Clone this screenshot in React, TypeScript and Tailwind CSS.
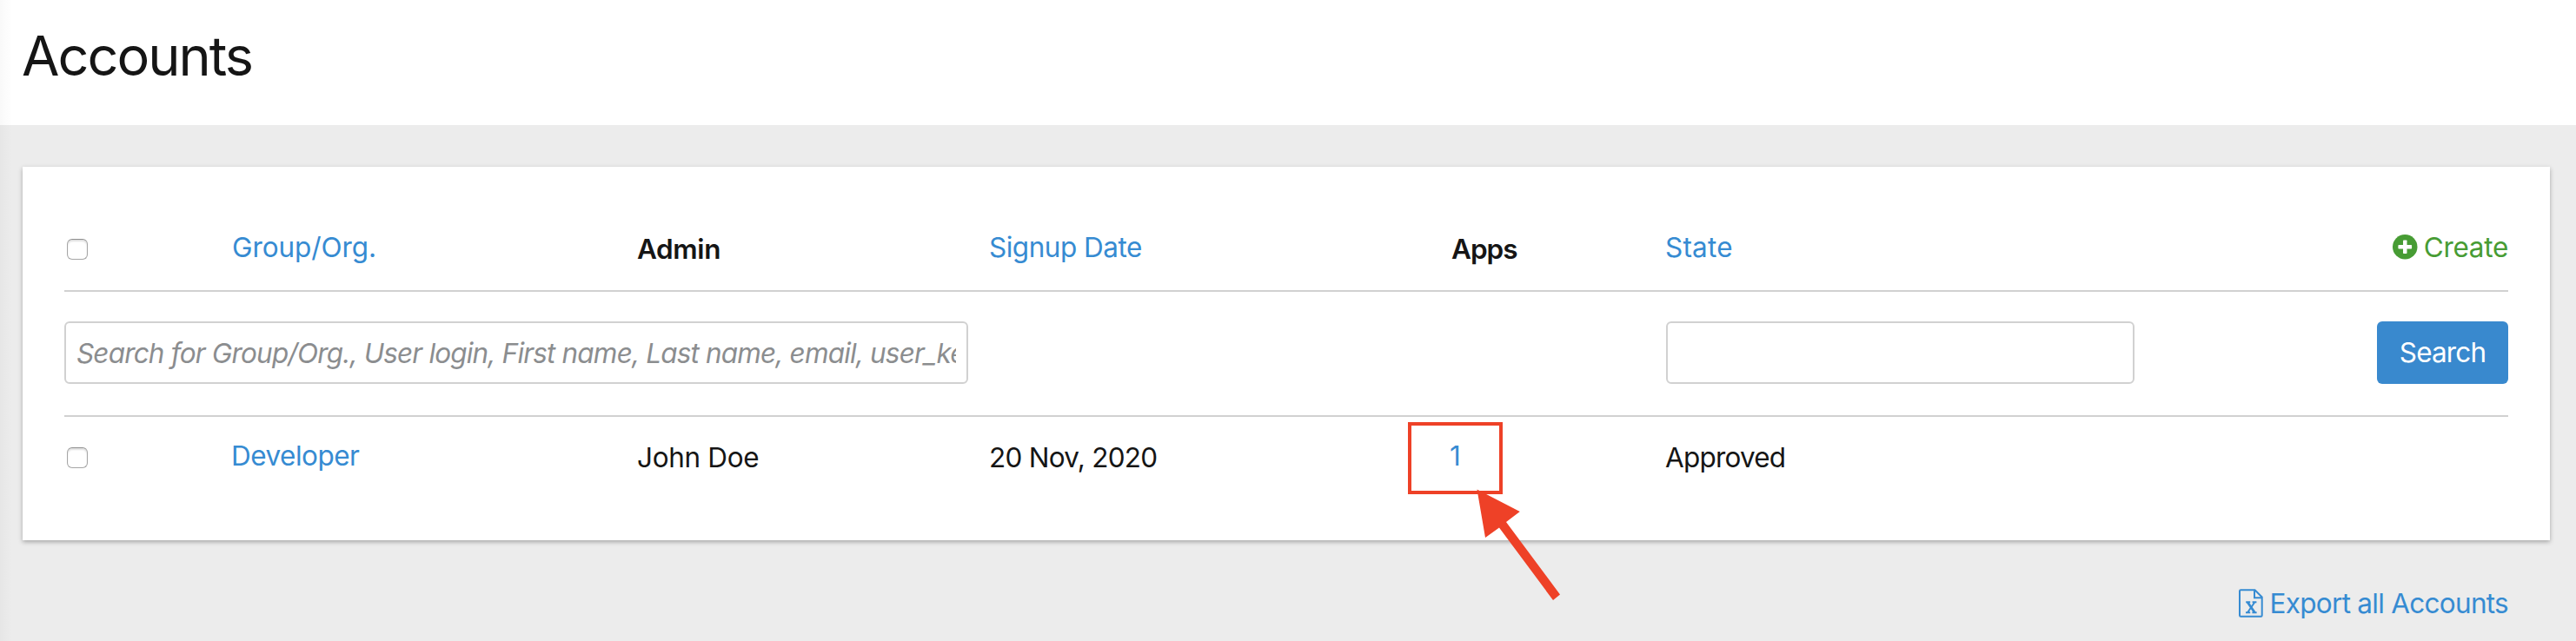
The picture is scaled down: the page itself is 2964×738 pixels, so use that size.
import React from 'react';

const GRID = 'grid grid-cols-[192px_467px_405px_532px_246px_1fr]';

function Checkbox() {
  return (
    <div className="ml-[3px] size-6 rounded-[6px] border border-[#a6a6a6] border-t-[#8f8f8f] bg-white shadow-[inset_0_2px_2px_rgba(0,0,0,0.13)]" />
  );
}

function PlusCircle() {
  return (
    <svg viewBox="0 0 28 28" className="mt-[5px] size-[28.5px]" aria-hidden="true">
      <circle cx="14" cy="14" r="14" fill="#479c34" />
      <rect x="6.3" y="11.8" width="15.4" height="4.4" rx="0.8" fill="#fff" />
      <rect x="11.8" y="6.3" width="4.4" height="15.4" rx="0.8" fill="#fff" />
    </svg>
  );
}

function ExcelFile() {
  return (
    <svg viewBox="0 0 28 33" className="mt-[3px] h-[33px] w-7" fill="none" stroke="#368bd2" aria-hidden="true">
      <path d="M2.3 1.3H18.5L26.7 9.5V30.5Q26.7 31.7 25.5 31.7H2.3Q1 31.7 1 30.5V2.5Q1 1.3 2.3 1.3Z" strokeWidth="2" />
      <path d="M18 1.8V10.3H26.3" strokeWidth="2" />
      <path d="M10.2 15.5L18.2 27" strokeWidth="2.8" />
      <path d="M18.2 15.5L10.2 27M8.2 15.3H13.2M15.6 15.3H20.4M8 27.2H13.2M15.4 27.2H20.6" strokeWidth="2" />
    </svg>
  );
}

export default function App() {
  return (
    <div className="relative h-[738px] w-[2964px] overflow-hidden bg-[#ececec] font-['Inter',sans-serif] text-[31.5px] leading-10 text-[#151515]">
      <header className="h-36 bg-white pt-[24px] pl-[25px]">
        <h1 className="text-[63px] leading-[80px] tracking-[-2px]">Accounts</h1>
      </header>

      <main className="pt-12 pr-[30px] pl-[26px]">
        <section className="h-[430px] bg-white px-12 pt-12 shadow-[0_2px_5px_rgba(0,0,0,0.3)]">
          <div className={`${GRID} h-24 border-b-2 border-[#d1d1d1] pt-[25px]`}>
            <div className="pt-[10px]"><Checkbox /></div>
            <a className="pl-px tracking-[-0.07px] text-[#368bd2]">Group/Org.</a>
            <div className="pt-0.5 font-semibold tracking-[-0.37px]">Admin</div>
            <a className="tracking-[-0.5px] text-[#368bd2]">Signup Date</a>
            <div className="pt-0.5 font-semibold tracking-[-1px]">Apps</div>
            <div className="flex justify-between">
              <a className="tracking-[0.2px] text-[#368bd2]">State</a>
              <a className="flex gap-[7px] tracking-[-0.3px] text-[#479c34]">
                <PlusCircle />
                Create
              </a>
            </div>
          </div>

          <div className="flex h-36 items-start border-b-2 border-[#d1d1d1] pt-[34px]">
            <input
              type="text"
              className="h-[72px] w-[1040px] rounded-[6px] border-2 border-[#d1d1d1] bg-white px-3 tracking-[-0.83px] placeholder:text-[#8b8d8f] placeholder:italic placeholder:opacity-100"
              placeholder="Search for Group/Org., User login, First name, Last name, email, user_key"
            />
            <input
              type="text"
              className="ml-[803px] h-[72px] w-[539px] rounded-[6px] border-2 border-[#d1d1d1] bg-white px-3"
            />
            <button className="ml-auto h-[72px] w-[151px] rounded-[6px] bg-[#3989ce] tracking-[-0.85px] text-white">
              Search
            </button>
          </div>

          <div className={`${GRID} pt-[25px]`}>
            <div className="pt-[10px]"><Checkbox /></div>
            <a className="tracking-[-0.5px] text-[#368bd2]">Developer</a>
            <div className="pt-0.5 tracking-[-0.34px]">John Doe</div>
            <div className="pt-0.5 tracking-[-0.75px]">20 Nov, 2020</div>
            <a className="-ml-0.5 text-[#368bd2]">1</a>
            <div className="pt-0.5 tracking-[-0.8px]">Approved</div>
          </div>
        </section>

        <footer className="flex justify-end pt-[53px] pr-[48px]">
          <a className="flex gap-[8px] tracking-[-0.72px] text-[#368bd2]">
            <ExcelFile />
            Export all Accounts
          </a>
        </footer>
      </main>

      <div className="absolute top-0 left-0 h-full w-[14px] bg-linear-to-r from-black/[0.025] to-transparent" />
      <div className="absolute top-[486px] left-[1620px] h-[83px] w-[109px] border-4 border-[#ee4127]" />
      <svg className="absolute top-[560px] left-[1690px] h-[136px] w-[112px]" viewBox="1690 560 112 136" aria-hidden="true">
        <path d="M1699.5 563.5L1748.8 589L1733 601L1795 684.5L1787 691L1725 607.5L1709 619Z" fill="#ee4127" />
      </svg>
    </div>
  );
}
